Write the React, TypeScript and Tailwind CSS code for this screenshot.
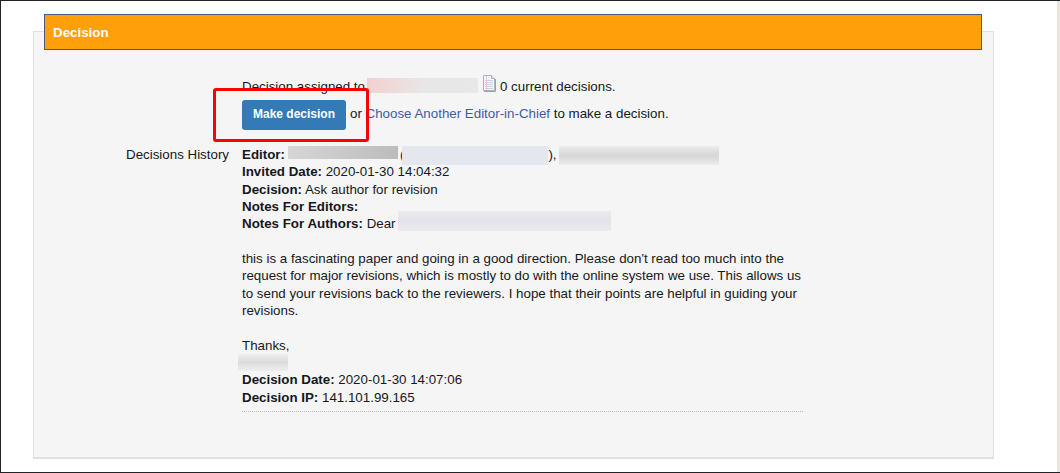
import React from "react";

function Blur({ w, h, cls, mt = 0 }: { w: number; h: number; cls: string; mt?: number }) {
  return (
    <span
      className={`inline-block align-top ${cls}`}
      style={{ width: w, height: h, marginTop: mt, marginBottom: -(h + mt - 17) }}
    />
  );
}

function NoteIcon() {
  return (
    <svg width="14" height="17" viewBox="0 0 14 17" className="inline-block align-top mt-[-3px]">
      <path d="M1.5.5H9.5L12.5 3.5V15.5H1.5Z" fill="#f6f7fa" stroke="#a9b2bd" />
      <path d="M9.5.5V3.5H12.5" fill="#e3e6ea" stroke="#a9b2bd" />
      <path d="M3 5.5H11M3 7.5H11M3 9.5H11M3 11.5H11M3 13.5H11" stroke="#c5d3e6" />
      <path d="M4.5 1V15" stroke="#f2c3c3" />
      <path d="M2 16.5H13.5V4" stroke="#9aa39f" fill="none" />
    </svg>
  );
}

export default function App() {
  return (
    <div className="relative h-[473px] w-[1060px] overflow-hidden border-t border-b border-l border-[#1f2428] bg-white pt-[13px] font-['Liberation_Sans',Arial,sans-serif] text-[13.33px] leading-[17.33px] text-[#15181c]">
      <div className="absolute top-0 right-0 bottom-0 w-[3px] bg-[#e9e6df]" />
      <div className="relative z-10 ml-[43px] flex h-[36px] w-[938px] items-center border border-[#4a5a80] bg-[#ff9f0a] pl-[8px] pt-[1px] font-bold text-white">
        Decision
      </div>
      <div className="mt-[-19px] ml-[32px] h-[428px] w-[961px] border border-b-2 border-[#e0e0e0] bg-[#f5f5f5] pt-[46px]">
        <div className="ml-[208px]">
          <div className="h-[17px] whitespace-nowrap">
            Decision assigned to
            <Blur w={111} h={15} cls="ml-[2px] bg-gradient-to-r from-[#f3d0d0] via-[#e8e6e6] to-[#e8e8e8]" />
            <span className="ml-[4px] inline-block w-[14px]">
              <NoteIcon />
            </span>
            <span className="ml-[4px]">0 current decisions.</span>
          </div>
          <div className="mt-[5px] flex h-[30px] items-center whitespace-nowrap">
            <button className="h-[30px] w-[104px] rounded-[3px] bg-[#337ab7] text-[12px] font-bold text-white">
              Make decision
            </button>
            <div className="mb-[2px]">
              <span className="ml-[4px]">or&nbsp;</span>
              <a className="text-[#3d5ba9]">Choose Another Editor-in-Chief</a>
              <span>&nbsp;to make a decision.</span>
            </div>
          </div>
        </div>
        <div className="mt-[16px] flex">
          <div className="w-[195px] text-right">Decisions History</div>
          <div className="ml-[13px] w-[561px]">
            <div className="h-[17.33px] whitespace-nowrap">
              <b>Editor:</b>
              <Blur w={110} h={13} cls="ml-[3px] bg-gradient-to-r from-[#d6d6d6] to-[#bcbcbc]" />
              <span className="ml-[2px]">(</span>
              <Blur w={146} h={19} cls="ml-[-2px] bg-[#e4e7ee]" />
              <span>),</span>
              <Blur w={160} h={19} cls="ml-[2px] bg-gradient-to-b from-[#ececec] via-[#d6d6d6] to-[#ececec]" />
            </div>
            <div><b>Invited Date:</b> 2020-01-30 14:04:32</div>
            <div><b>Decision:</b> Ask author for revision</div>
            <div><b>Notes For Editors:</b></div>
            <div className="whitespace-nowrap">
              <b>Notes For Authors:</b> Dear
              <Blur w={213} h={20} mt={-4} cls="ml-[2px] bg-gradient-to-b from-[#ebebef] via-[#e2e2e8] to-[#ebebef]" />
            </div>
            <div className="mt-[17.33px]">
              this is a fascinating paper and going in a good direction. Please don't read too much into the request for major revisions, which is mostly to do with the online system we use. This allows us to send your revisions back to the reviewers. I hope that their points are helpful in guiding your revisions.
            </div>
            <div className="mt-[17.33px]">Thanks,</div>
            <div className="h-[17.33px]">
              <Blur w={50} h={17} cls="ml-[-4px] bg-gradient-to-b from-[#eeeeee] via-[#dcdcdc] to-[#eeeeee]" />
            </div>
            <div><b>Decision Date:</b> 2020-01-30 14:07:06</div>
            <div><b>Decision IP:</b> 141.101.99.165</div>
            <div className="mt-[5px] border-b border-dotted border-[#bbbbbb]" />
          </div>
        </div>
      </div>
      <div className="absolute top-[87px] left-[212px] h-[54px] w-[156px] rounded-[3px] border-[3px] border-[#ff0000]" />
    </div>
  );
}
